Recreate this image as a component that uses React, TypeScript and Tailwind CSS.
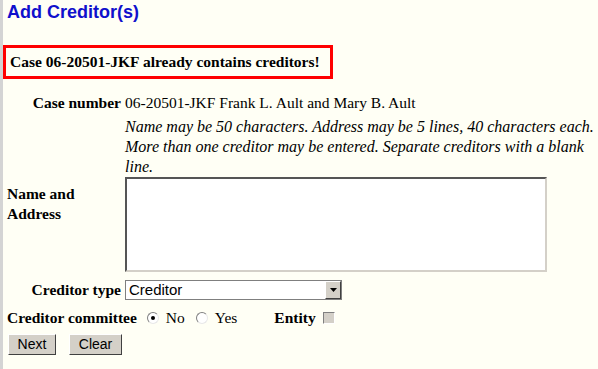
export default function App() {
  return (
    <div className="min-h-screen w-[598px] h-[369px] overflow-hidden bg-[#fffff5] border-l-[3px] border-[#d4d4d4] font-['Liberation_Serif',serif] text-[15.5px] text-black">
      <h1 className="pl-[4px] pt-[1px] font-['Liberation_Sans',sans-serif] text-[18px] leading-[22px] font-bold text-[#1010cc]">
        Add Creditor(s)
      </h1>

      <div className="mt-[22px] w-[330px] h-[34px] border-[3px] border-[#ff0000] pl-[4px] flex items-center font-bold">
        Case 06-20501-JKF already contains creditors!
      </div>

      {/* form table */}
      <div className="mt-[14px] grid grid-cols-[114px_1fr] gap-x-[4px] pl-[4px]">
        <div className="text-right font-bold leading-[20px]">Case number</div>
        <div className="leading-[20px] whitespace-nowrap">06-20501-JKF Frank L. Ault and Mary B. Ault</div>

        <div />
        <div className="mt-[4px] italic leading-[20px] text-[16px]">
          Name may be 50 characters. Address may be 5 lines, 40 characters each. More than one creditor may be entered. Separate creditors with a blank line.
        </div>

        <div className="self-start pt-[7px] font-bold leading-[20px]">
          Name and Address
        </div>
        <div>
          <textarea className="block w-[422px] h-[95px] bg-white border-2 border-t-[#555] border-l-[#555] border-b-[#d4d0c8] border-r-[#d4d0c8] resize-none outline-none" />
        </div>

        <div className="mt-[8px] text-right font-bold leading-[20px]">Creditor type</div>
        <div className="mt-[8px] flex w-[217px] h-[20px] border border-[#7f7f7f] bg-white">
          <span className="flex-1 pl-[3px] font-['Liberation_Sans',sans-serif] text-[15px] leading-[18px]">Creditor</span>
          <span className="w-[16px] h-[18px] bg-[#d4d0c8] border border-t-white border-l-white border-b-[#404040] border-r-[#404040] flex items-center justify-center">
            <svg width="7" height="4" viewBox="0 0 7 4">
              <path d="M0 0h7L3.5 4z" fill="#000" />
            </svg>
          </span>
        </div>
      </div>

      <div className="mt-[8px] pl-[4px] flex items-center h-[20px] whitespace-nowrap">
        <span className="font-bold">Creditor committee</span>
        <span className="ml-[10px] flex items-center gap-[7px]">
          <Radio checked />
          <span>No</span>
        </span>
        <span className="ml-[11px] flex items-center gap-[7px]">
          <Radio />
          <span>Yes</span>
        </span>
        <span className="ml-[37px] font-bold">Entity</span>
        <span className="ml-[7px] w-[12px] h-[12px] bg-[#d4d0c8] border border-t-[#808080] border-l-[#808080] border-b-white border-r-white" />
      </div>

      <div className="mt-[6px] pl-[5px] flex gap-[13px] font-['Liberation_Sans',sans-serif] text-[14px]">
        <Btn w="w-[48px]">Next</Btn>
        <Btn w="w-[53px]">Clear</Btn>
      </div>
    </div>
  );
}

function Radio({ checked }: { checked?: boolean }) {
  return (
    <span className="relative w-[12px] h-[12px] rounded-full bg-white border border-t-[#808080] border-l-[#808080] border-b-[#e8e8e8] border-r-[#e8e8e8] flex items-center justify-center">
      {checked && <span className="w-[4px] h-[4px] rounded-full bg-black" />}
    </span>
  );
}

function Btn({ w, children }: { w: string; children: string }) {
  return (
    <button className={`${w} h-[21px] bg-[#d4d0c8] border border-t-white border-l-white border-b-[#404040] border-r-[#404040] text-black leading-[19px]`}>
      {children}
    </button>
  );
}
